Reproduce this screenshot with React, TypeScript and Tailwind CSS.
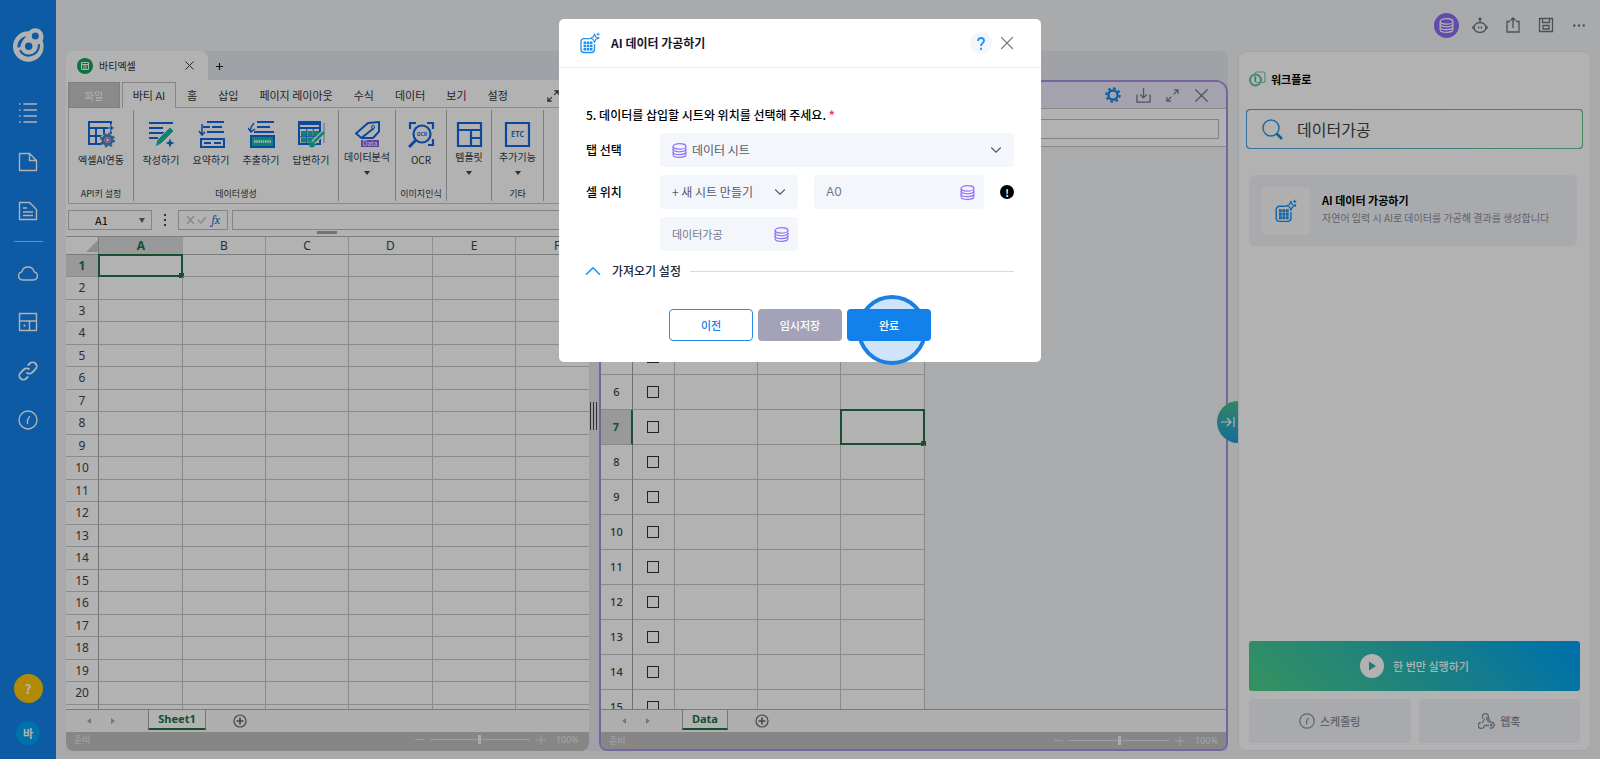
import React from 'react';
import { ChevronDown, ChevronUp, X } from 'lucide-react';

type IconProps = { className?: string };

const menuTabs = ['홈', '삽입', '페이지 레이아웃', '수식', '데이터', '보기', '설정'];
const leftColumns = ['A', 'B', 'C', 'D', 'E', 'F'];
const leftRows = Array.from({ length: 20 }, (_, i) => i + 1);
const rightRows = Array.from({ length: 15 }, (_, i) => i + 1);

/* ---------- Icons ---------- */

const LogoIcon = () => (
  <svg viewBox="0 0 32 34" className="h-[34px] w-8" fill="none">
    <circle cx="16.3" cy="18.5" r="15.3" fill="#fff" />
    <circle cx="23.3" cy="8.5" r="8.3" fill="#fff" />
    <circle cx="23.3" cy="8" r="3.5" fill="#1381ec" />
    <circle cx="16.7" cy="18.300" r="3.700" fill="#1381ec" />
    <path d="M5.500 19.500c-.5-5.500 3-10.500 9-11.300-3 3-5.500 6.300-6.300 11z" fill="#1381ec" />
    <path d="M8.500 23c2 3.500 5.500 5 9.500 4.500 5-.6 9-4.500 9-10.500" stroke="#1381ec" strokeWidth="2.200" strokeLinecap="round" />
  </svg>
);

const DatabaseIcon = ({ className }: IconProps) => (
  <svg viewBox="0 0 16 16" className={className} fill="none" stroke="currentColor" strokeWidth="1.2">
    <ellipse cx="8" cy="3.600" rx="6.800" ry="2.900" />
    <path d="M1.200 3.600v8.800c0 1.600 3 2.900 6.800 2.900s6.800-1.300 6.800-2.900V3.600" />
    <path d="M1.200 6.500c0 1.600 3 2.900 6.800 2.900s6.800-1.300 6.800-2.900M1.200 9.500c0 1.600 3 2.900 6.800 2.900s6.800-1.300 6.800-2.900" />
  </svg>
);

const AiGridIcon = ({ className }: IconProps) => (
  <svg viewBox="0 0 20 22" className={className} fill="none">
    <path d="M10 6.700H4A3 3 0 0 0 1 9.700V17.500a3 3 0 0 0 3 3h7.500a3 3 0 0 0 3-3V12" stroke="#1c8ff0" strokeWidth="1.300" />
    <path d="M3.500 9.500h2.600v2.600H3.500zM6.700 9.500h2.600v2.600H6.700zM9.900 9.500h2.600v2.600H9.900zM3.500 12.700h2.600v2.600H3.500zM6.700 12.700h2.600v2.600H6.700zM9.900 12.700h2.600v2.600H9.900zM3.500 15.900h2.600v2.600H3.500zM6.700 15.900h2.600v2.600H6.700zM9.900 15.900h2.600v2.600H9.900z" fill="#1c8ff0" />
    <path d="M14.500 2l1.200 3 2.800 1.200-2.800 1.200-1.200 3-1.200-3-2.800-1.200 2.800-1.200z" stroke="#1c8ff0" strokeWidth="1.100" strokeLinejoin="round" />
    <path d="M18 .8v3M16.600 2.300h3M18.800 4.800v2" stroke="#1c8ff0" strokeWidth="1" />
  </svg>
);

const ExpandIcon = ({ className }: IconProps) => (
  <svg viewBox="0 0 14 14" className={className} fill="none" stroke="currentColor" strokeWidth="1.300">
    <path d="M8.500 1H13v4.500M13 1 8.300 5.700M5.500 13H1V8.500M1 13l4.700-4.700" />
  </svg>
);

const GaugeIcon = ({ className }: IconProps) => (
  <svg viewBox="0 0 20 20" className={className} fill="none" stroke="currentColor" strokeWidth="1.500">
    <circle cx="10" cy="10" r="9" />
    <path d="M9.500 13.500V10l2-3.500" strokeLinecap="round" />
  </svg>
);

const sideIcons: { label: string; icon: React.ReactNode }[] = [
  {
    label: '목록',
    icon: <path d="M5.500 1H19M5.500 7H19M5.500 13H19M5.500 19H19M1 1h1.500M1 7h1.500M1 13h1.500M1 19h1.500" />,
  },
  { label: '새 문서', icon: <path d="M1.500 1.500h10l7 7v10h-17zM11.500 1.500v7h7" /> },
  { label: '문서', icon: <path d="M1.500 1.500h10l7 7v10h-17zM5 7h4M5 11h10M5 14.500h10" /> },
];

const moreIcons: { label: string; icon: React.ReactNode }[] = [
  { label: '클라우드', icon: <path d="M4.500 17a4.200 4.200 0 0 1-.6-8.300 6.300 6.300 0 0 1 12.200 0 4.200 4.200 0 0 1-.6 8.300z" /> },
  {
    label: '레이아웃',
    icon: (
      <>
        <path d="M1.500 1.500h17v17h-17zM1.500 9h17M11.500 9v9.500" />
        <rect x="5.500" y="12.500" width="2" height="2" fill="currentColor" stroke="none" />
      </>
    ),
  },
  {
    label: '연결',
    icon: (
      <path d="M8.500 11.500a4 4 0 0 0 5.700 0l3.300-3.300a4 4 0 0 0-5.700-5.700l-2 2M11.500 8.500a4 4 0 0 0-5.700 0l-3.300 3.300a4 4 0 0 0 5.700 5.700l2-2" strokeWidth="1.800" />
    ),
  },
  {
    label: '사용량',
    icon: (
      <>
        <circle cx="10" cy="10" r="9" />
        <path d="M9.500 13.500V10l2-3.500" strokeLinecap="round" />
      </>
    ),
  },
];

/* ---------- Sidebar ---------- */

const SideButton: React.FC<{ label: string; children: React.ReactNode }> = ({ label, children }) => (
  <button type="button" aria-label={label} className="flex h-[49px] w-full items-center justify-center text-white">
    <svg viewBox="0 0 20 20" className="h-5 w-5" fill="none" stroke="currentColor" strokeWidth="1.4">
      {children}
    </svg>
  </button>
);

const Sidebar = () => (
  <nav className="flex w-14 shrink-0 flex-col items-center bg-[#1381ec] pt-7 pb-[14px]">
    <LogoIcon />
    <div className="mt-[26px] w-full">
      {sideIcons.map((item) => (
        <SideButton key={item.label} label={item.label}>{item.icon}</SideButton>
      ))}
    </div>
    <div className="my-[6px] h-px w-[29px] bg-white/60" />
    <div className="w-full">
      {moreIcons.map((item) => (
        <SideButton key={item.label} label={item.label}>{item.icon}</SideButton>
      ))}
    </div>
    <button type="button" className="mt-auto h-[29px] w-[29px] rounded-full bg-[#ffc80a] text-[13px] font-bold text-white">?</button>
    <button type="button" className="mt-[18px] h-6 w-6 rounded-full bg-[#00a2f2] text-[11px] font-bold text-white">바</button>
  </nav>
);

/* ---------- Ribbon ---------- */

const TextLines = () => <path d="M1 2h24M1 7h14M1 12h19M1 17h9" stroke="#1268e0" strokeWidth="2" />;

const ribbonIcons = {
  excel: (
    <>
      <path d="M1 1h22v22H1zM1 7h22M1 15h22M8 7v16M16 7v16" stroke="#1268e0" strokeWidth="2" />
      <circle cx="19.500" cy="19" r="7.500" fill="#fff" />
      <circle cx="19.500" cy="19" r="4.500" stroke="#4a86b8" strokeWidth="3" />
      <circle cx="19.500" cy="19" r="6.500" stroke="#4a86b8" strokeWidth="2" strokeDasharray="2.5 2.6" />
      <circle cx="19.500" cy="19" r="2" stroke="#c05fd0" strokeWidth="1.500" />
      <path d="M23.500 3l1 3 2.500 1-2.500 1-1 3-1-3-2.500-1 2.500-1z" fill="#1268e0" stroke="#fff" strokeWidth=".6" />
    </>
  ),
  write: (
    <>
      <TextLines />
      <path d="M9 19 22 6l4 4-13 13-6 3z" fill="#12bda6" stroke="#fff" strokeWidth="1" />
      <path d="M22 17.500l1.300 3.200 3.200 1.300-3.200 1.300-1.300 3.200-1.300-3.200-3.200-1.300 3.200-1.300z" fill="#1268e0" />
    </>
  ),
  summary: (
    <>
      <path d="M9 1h17M5 6h7M14 6h10M9 11h17" stroke="#1268e0" strokeWidth="2" />
      <path d="M4 3v10M1 10l3 4 3-3" stroke="#1268e0" strokeWidth="1.500" />
      <path d="M3 18h23v8H3zM6 22h7M16 22h7" stroke="#1268e0" strokeWidth="2" />
    </>
  ),
  extract: (
    <>
      <path d="M9 1h17M9 6h13M6 11h20" stroke="#1268e0" strokeWidth="2" />
      <path d="M6 2C3 5 2 8 3 11M0 7l3 4 4-3" stroke="#1268e0" strokeWidth="1.500" />
      <path d="M3 15h23v11H3z" fill="#12bda6" stroke="#1268e0" strokeWidth="2" />
      <path d="M6 20.500h17" stroke="#fff" strokeWidth="2.500" strokeDasharray="1.500 .7" />
    </>
  ),
  answer: (
    <>
      <path d="M1 1h21v22H1zM1 3h21M1 7h21" stroke="#1268e0" strokeWidth="2" />
      <path d="M3 10h5v5H3zM9.500 10h5v5h-5zM16 10h5v5h-5zM3 16.500h5v5H3zM9.500 16.500h5v5h-5z" fill="#12bda6" />
      <path d="M8.700 8v15M15.200 8v15M2 15.700h19" stroke="#1268e0" />
      <path d="M25 12 14 23" stroke="#fff" strokeWidth="5" />
      <path d="M26 11 16 21" stroke="#12bda6" strokeWidth="2.500" />
      <circle cx="14" cy="23.500" r="3" fill="#12bda6" />
      <path d="M26 2v20" stroke="#8e99ae" />
    </>
  ),
  analysis: (
    <>
      <path d="M14 2 25 1v9.500L19 17H7.500L2 12.500zM8 16.500 20 7" stroke="#1268e0" strokeWidth="2" strokeLinejoin="round" />
      <circle cx="19" cy="6" r="1.500" fill="#fff" stroke="#1268e0" />
      <rect x="7" y="19" width="18" height="7" fill="#8a5cf0" />
      <text x="16" y="25" textAnchor="middle" fontSize="7" fill="#fff">Data</text>
    </>
  ),
  ocr: (
    <>
      <path d="M2 8V2h6M19 2h6v6M25 18v6h-5" stroke="#1268e0" strokeWidth="2.200" />
      <circle cx="14" cy="13" r="8.500" stroke="#1268e0" strokeWidth="2.200" />
      <path d="M8 19l-7 7" stroke="#1268e0" strokeWidth="3" />
      <text x="14" y="15" textAnchor="middle" fontSize="5" fontWeight="bold" fill="#1268e0">OCR</text>
    </>
  ),
  template: <path d="M2 2h23v23H2zM2 9h23M15 9v16M15 17h10" stroke="#1268e0" strokeWidth="2.200" />,
  etc: (
    <>
      <path d="M2 2h23v23H2z" stroke="#1268e0" strokeWidth="2.200" />
      <text x="13.500" y="16" textAnchor="middle" fontSize="7" fontWeight="bold" fill="#1268e0">ETC</text>
    </>
  ),
};

const RibbonButton: React.FC<{ icon: keyof typeof ribbonIcons; label: string; drop?: boolean }> = ({ icon, label, drop }) => (
  <button type="button" className="flex w-[50px] flex-col items-center text-[10px] leading-4 whitespace-nowrap text-[#333744]">
    <svg viewBox="0 0 27 27" className="h-[27px] w-[27px]" fill="none">{ribbonIcons[icon]}</svg>
    <span className={drop ? 'mt-px' : 'mt-1'}>{label}</span>
    {drop && <span className="mt-[6px] h-0 w-0 border-x-[3px] border-t-[4px] border-x-transparent border-t-[#444]" />}
  </button>
);

const RibbonGroup: React.FC<{ title?: string; className: string; children: React.ReactNode }> = ({ title, className, children }) => (
  <div className={`flex shrink-0 flex-col items-center justify-between border-r border-[#b4b4b4] ${className}`}>
    <div className="flex pt-[11px]">{children}</div>
    <span className="text-[9px] leading-[14px] text-[#333744]">{title}</span>
  </div>
);

const Ribbon = () => (
  <>
    <div className="flex h-7 items-stretch pl-[2px] text-[11px] text-[#333]">
      <button type="button" className="mt-[2px] w-[52px] border border-[#b8b8b8] bg-[#c6c6c6] text-[10px] text-white">파일</button>
      <button type="button" className="mt-[2px] ml-[2px] w-[54px] border border-b-0 border-[#c0c0c0] bg-white">바티 AI</button>
      <div className="flex flex-1 items-center gap-[21px] border-b border-[#c8c8c8] pt-1 pl-[11px] whitespace-nowrap">
        {menuTabs.map((tab) => (
          <button key={tab} type="button">{tab}</button>
        ))}
        <button type="button" aria-label="확장" className="ml-[18px]">
          <ExpandIcon className="h-3 w-3" />
        </button>
      </div>
    </div>
    <div className="ml-[2px] flex h-24 items-stretch border-b border-l border-[#c8c8c8] py-[2px]">
      <RibbonGroup title="API키 설정" className="w-[65px]">
        <RibbonButton icon="excel" label="엑셀AI연동" />
      </RibbonGroup>
      <RibbonGroup title="데이터생성" className="w-[205px]">
        <RibbonButton icon="write" label="작성하기" />
        <RibbonButton icon="summary" label="요약하기" />
        <RibbonButton icon="extract" label="추출하기" />
        <RibbonButton icon="answer" label="답변하기" />
      </RibbonGroup>
      <RibbonGroup className="w-[57px]">
        <RibbonButton icon="analysis" label="데이터분석" drop />
      </RibbonGroup>
      <RibbonGroup title="이미지인식" className="w-[51px]">
        <RibbonButton icon="ocr" label="OCR" />
      </RibbonGroup>
      <RibbonGroup className="w-[45px]">
        <RibbonButton icon="template" label="템플릿" drop />
      </RibbonGroup>
      <RibbonGroup title="기타" className="w-[52px]">
        <RibbonButton icon="etc" label="추가기능" drop />
      </RibbonGroup>
    </div>
    <div className="flex h-[33px] items-start border-b border-[#b4b4b4] pt-[6px] pl-[2px]">
      <div className="flex h-5 w-[84px] items-center border border-[#bdbdbd] pr-[6px]">
        <input aria-label="이름 상자" defaultValue="A1" className="w-full min-w-0 pl-[26px] text-[11px] outline-none" />
        <span className="h-0 w-0 shrink-0 border-x-[3px] border-t-[5px] border-x-transparent border-t-[#666]" />
      </div>
      <div className="flex h-5 w-[26px] flex-col items-center justify-center gap-[3px]">
        <span className="h-[2px] w-[2px] bg-[#444]" />
        <span className="h-[2px] w-[2px] bg-[#444]" />
        <span className="h-[2px] w-[2px] bg-[#444]" />
      </div>
      <div className="flex h-5 w-[50px] items-center justify-around border border-[#bdbdbd] px-1">
        <svg viewBox="0 0 20 8" className="h-2 w-5" fill="none" stroke="#c8c8c8" strokeWidth="1.5">
          <path d="M1 0l7 8M8 0 1 8M12 4l3 3 5-6" />
        </svg>
        <span className="font-serif text-[12px] text-[#2a6bc0] italic">fx</span>
      </div>
      <input aria-label="수식 입력줄" className="ml-1 h-5 min-w-0 flex-1 border border-r-0 border-[#bdbdbd] outline-none" />
    </div>
  </>
);

/* ---------- Sheets ---------- */

const SheetTabs: React.FC<{ name: string; tabClass: string }> = ({ name, tabClass }) => (
  <div className="flex h-[23px] shrink-0 items-start border-t border-[#b0b0b0] bg-[#fafafa]">
    <div className="flex h-full w-20 items-center gap-5 pl-[21px]">
      <span className="h-0 w-0 border-y-[3px] border-r-[4px] border-y-transparent border-r-[#aaa]" />
      <span className="h-0 w-0 border-y-[3px] border-l-[4px] border-y-transparent border-l-[#aaa]" />
    </div>
    <button type="button" className={`h-5 border-x border-b-2 border-x-[#aaa] border-b-[#217346] bg-white font-['Noto_Sans',sans-serif] text-[11px] font-bold text-[#217346] ${tabClass}`}>
      {name}
    </button>
    <button type="button" aria-label="시트 추가" className="mt-1 ml-[27px]">
      <svg viewBox="0 0 14 14" className="h-[14px] w-[14px]" fill="none" stroke="#666" strokeWidth="1.200">
        <circle cx="7" cy="7" r="6" />
        <path d="M7 3.500v7M3.500 7h7" strokeWidth="1.600" />
      </svg>
    </button>
  </div>
);

const StatusBar: React.FC<{ className: string }> = ({ className }) => (
  <div className={`flex shrink-0 items-center bg-[#c0c0c0] text-[9px] text-[#ececec] ${className}`}>
    <span>준비</span>
    <div className="ml-auto flex items-center">
      <span className="h-px w-[9px] bg-[#e4e4e4]" />
      <div className="mx-[6px] flex h-px w-[100px] items-center justify-center bg-[#e4e4e4]">
        <span className="h-[9px] w-[3px] bg-[#f4f4f4]" />
      </div>
      <svg viewBox="0 0 10 10" className="h-[10px] w-[10px]" stroke="#e4e4e4">
        <path d="M5 0v10M0 5h10" />
      </svg>
      <span className="ml-[10px] w-[25px] font-['Noto_Sans',sans-serif]">100%</span>
    </div>
  </div>
);

const Handle = () => <span className="absolute -right-[3px] -bottom-[3px] h-[5px] w-[5px] bg-[#217346]" />;

const LeftSheet = () => (
  <section className="relative flex w-[45%] shrink-0 flex-col overflow-hidden rounded-b-lg bg-white">
    <Ribbon />
    <span className="absolute top-[151px] left-[251px] h-[3px] w-5 bg-[#a5a5a5]" />
    <div className="min-h-0 flex-1 overflow-hidden">
      <table className="w-[533px] table-fixed border-separate border-spacing-0 font-['Noto_Sans',sans-serif] text-[12px] leading-4 text-[#444]">
        <colgroup>
          <col className="w-[33px]" />
          <col className="w-[84px]" />
          <col className="w-[83px]" />
          <col className="w-[83px]" />
          <col className="w-[84px]" />
          <col className="w-[83px]" />
          <col className="w-[83px]" />
        </colgroup>
        <thead>
          <tr className="h-[18px]">
            <th className="border-r border-b border-[#b0b0b0] p-0">
              <span className="ml-auto block h-0 w-0 border-b-[12px] border-l-[12px] border-b-[#ccc] border-l-transparent" />
            </th>
            {leftColumns.map((col) => (
              <th
                key={col}
                className={col === 'A' ? 'border-b border-[#b0b0b0] bg-[#dcdcdc] p-0 text-[#217346]' : 'border-r border-b border-r-[#d0d0d0] border-b-[#b0b0b0] p-0 font-normal'}
              >
                {col}
              </th>
            ))}
          </tr>
        </thead>
        <tbody>
          {leftRows.map((row) => (
            <tr key={row} className="odd:h-[22px] even:h-[23px]">
              <th
                className={
                  row === 1
                    ? 'border-r border-b border-[#c8c8c8] bg-[#dcdcdc] p-0 text-[#217346]'
                    : 'border-r border-b border-r-[#a8a8a8] border-b-[#c8c8c8] p-0 font-normal'
                }
              >
                {row}
              </th>
              {leftColumns.map((col) => (
                <td key={col} className="relative border-r border-b border-[#c6c6c6] p-0">
                  {row === 1 && col === 'A' && (
                    <div className="absolute -inset-px border-2 border-[#217346]">
                      <Handle />
                    </div>
                  )}
                </td>
              ))}
            </tr>
          ))}
          <tr className="h-[22px]">
            <td className="border-r border-[#a8a8a8]" />
            {leftColumns.map((col) => (
              <td key={col} className="border-r border-[#c6c6c6]" />
            ))}
          </tr>
        </tbody>
      </table>
    </div>
    <SheetTabs name="Sheet1" tabClass="ml-[2px] w-[58px]" />
    <StatusBar className="h-[19px] pr-2 pb-1 pl-2" />
  </section>
);

const RightSheet = () => (
  <section className="flex min-w-0 flex-1 flex-col overflow-hidden rounded-t-xl rounded-b-lg border-2 border-[#ab90e0] bg-[#f3f5f8]">
    <div className="flex h-[26px] shrink-0 items-center justify-end gap-[15px] bg-[#ebe8fb] pr-[13px] text-[#777a8a]">
      <button type="button" aria-label="설정">
        <svg viewBox="0 0 16 16" className="h-4 w-4" fill="none" stroke="#0a80ea">
          <circle cx="8" cy="8" r="4.600" strokeWidth="2.200" />
          <circle cx="8" cy="8" r="6.700" strokeWidth="2" strokeDasharray="2.600 2.662" />
        </svg>
      </button>
      <button type="button" aria-label="다운로드">
        <svg viewBox="0 0 16 16" className="h-[15px] w-[15px]" fill="none" stroke="currentColor" strokeWidth="1.400">
          <path d="M1 7v8h14V7M8 0v10.500M4.500 7 8 10.500 11.500 7" />
        </svg>
      </button>
      <button type="button" aria-label="확장">
        <ExpandIcon className="h-[13px] w-[13px]" />
      </button>
      <button type="button" aria-label="닫기" className="-ml-1">
        <X className="h-[23px] w-[23px]" strokeWidth={1.3} />
      </button>
    </div>
    <div className="h-[39px] shrink-0 border-y border-[#c4c4c4] bg-white pt-[8px] pr-[7px] pb-[9px] pl-[170px]">
      <input aria-label="데이터 수식 입력줄" className="h-full w-full border border-[#bdbdbd] outline-none" />
    </div>
    <div className="min-h-0 flex-1 overflow-hidden">
      <table className="w-[324px] table-fixed border-separate border-spacing-0 bg-white font-['Noto_Sans',sans-serif] text-[11px] text-[#444]">
        <colgroup>
          <col className="w-8" />
          <col className="w-[42px]" />
          <col className="w-[83px]" />
          <col className="w-[83px]" />
          <col className="w-[84px]" />
        </colgroup>
        <thead>
          <tr className="h-[53px]">
            <th className="border-r border-b border-[#b0b0b0]" />
            <th className="border-r border-b border-[#b0b0b0]" />
            <th className="border-r border-b border-[#b0b0b0]">A</th>
            <th className="border-r border-b border-[#b0b0b0]">B</th>
            <th className="border-r border-b border-[#b0b0b0]">C</th>
          </tr>
        </thead>
        <tbody>
          {rightRows.map((row) => (
            <tr key={row} className="h-[35px]">
              <th
                className={
                  row === 7
                    ? 'border-r-2 border-b border-r-[#217346] border-b-[#c6c6c6] bg-[#dcdcdc] p-0 text-[#217346]'
                    : 'border-r border-b border-r-[#a0a0a0] border-b-[#c6c6c6] p-0 font-medium'
                }
              >
                {row}
              </th>
              <td className="border-r border-b border-[#c6c6c6] p-0">
                <input
                  type="checkbox"
                  aria-label={`${row}행 선택`}
                  className="mx-auto block h-3 w-3 appearance-none border border-[#333] bg-white"
                />
              </td>
              <td className="border-r border-b border-[#c6c6c6]" />
              <td className="border-r border-b border-[#c6c6c6]" />
              <td className="relative border-r border-b border-[#c6c6c6]">
                {row === 7 && (
                  <div className="absolute -inset-px border-2 border-[#217346]">
                    <Handle />
                  </div>
                )}
              </td>
            </tr>
          ))}
        </tbody>
      </table>
    </div>
    <SheetTabs name="Data" tabClass="ml-px w-[46px]" />
    <StatusBar className="h-[17px] pr-[6px] pl-2" />
  </section>
);

const Workspace = () => (
  <div className="relative flex min-w-0 flex-1 flex-col">
    <div className="flex h-[29px] shrink-0 items-stretch rounded-t-lg bg-[#e7e9ef]">
      <div className="flex w-[142px] items-center rounded-t-lg bg-white pr-[11px] pl-[11px] text-[10px] text-[#333]">
        <span className="mr-[6px] flex h-4 w-4 items-center justify-center rounded-full bg-[#10a45c]">
          <svg viewBox="0 0 8 8" className="h-2 w-2" fill="none" stroke="#fff">
            <path d="M.5.5h7v7h-7zM.5 2.500h7M2 4h4M2 6h4" />
          </svg>
        </span>
        바티엑셀
        <button type="button" aria-label="탭 닫기" className="ml-auto">
          <X className="h-[15px] w-[15px]" strokeWidth={1.5} />
        </button>
      </div>
      <button type="button" aria-label="새 탭" className="ml-2 pt-[2px]">
        <svg viewBox="0 0 8 8" className="h-[7px] w-[7px]" stroke="#222" strokeWidth="1.400">
          <path d="M4 0v8M0 4h8" />
        </svg>
      </button>
    </div>
    <div className="flex min-h-0 flex-1 bg-[#e7e9ef]">
      <LeftSheet />
      <div className="flex w-[10px] shrink-0 items-center justify-center gap-[2px]">
        <span className="h-7 w-px bg-[#444]" />
        <span className="h-7 w-px bg-[#444]" />
        <span className="h-7 w-px bg-[#444]" />
      </div>
      <RightSheet />
    </div>
    <button
      type="button"
      aria-label="워크플로 접기"
      className="absolute top-1/2 -right-[10px] flex h-[42px] w-[21px] items-center justify-center rounded-l-full bg-linear-to-b from-[#4bbd8e] to-[#1e9bd8]"
    >
      <svg viewBox="0 0 14 10" className="h-[10px] w-[14px]" fill="none" stroke="#fff" strokeWidth="1.200">
        <path d="M0 5h10M6 1l4 4-4 4M13 0v10" />
      </svg>
    </button>
  </div>
);

/* ---------- Header and workflow panel ---------- */

const TopBar = () => (
  <header className="flex h-[50px] shrink-0 items-center justify-end gap-[17px] pr-[13px] text-[#6f7282]">
    <button type="button" aria-label="데이터" className="-mr-1 flex h-[25px] w-[25px] items-center justify-center rounded-full bg-[#8b6cf5] text-white">
      <DatabaseIcon className="h-[15px] w-[15px]" />
    </button>
    <button type="button" aria-label="로봇">
      <svg viewBox="0 0 16 16" className="h-4 w-4" fill="none" stroke="currentColor" strokeWidth="1.300">
        <ellipse cx="8" cy="10.500" rx="6" ry="5" />
        <path d="M8 5.500V1M6.500 2.500 8 1l1.500 1.500M2 9 .7 10.500 2 12M14 9l1.300 1.500L14 12M6.700 9.500v2M9.300 9.500v2" />
      </svg>
    </button>
    <button type="button" aria-label="내보내기">
      <svg viewBox="0 0 16 16" className="h-4 w-4" fill="none" stroke="currentColor" strokeWidth="1.300">
        <path d="M5 4.500H2v10.500h12V4.500h-3M8 11V1M5.500 3.500 8 1l2.500 2.500" />
      </svg>
    </button>
    <button type="button" aria-label="저장">
      <svg viewBox="0 0 16 16" className="h-4 w-4" fill="none" stroke="currentColor" strokeWidth="1.300">
        <path d="M1.500 1.500h13v13h-13zM4.500 1.500v4h7v-4M5 8.500h6v3.500H5z" />
      </svg>
    </button>
    <button type="button" aria-label="더보기">
      <svg viewBox="0 0 16 16" className="h-4 w-4" fill="currentColor">
        <circle cx="3.300" cy="8.500" r="1.200" />
        <circle cx="8" cy="8.500" r="1.200" />
        <circle cx="12.700" cy="8.500" r="1.200" />
      </svg>
    </button>
  </header>
);

const WorkflowPanel = () => (
  <aside className="ml-[10px] flex w-[353px] shrink-0 flex-col rounded-lg border border-[#e9ebf2] bg-white px-[10px] pb-[7px]">
    <h2 className="mt-[19px] flex h-4 items-center gap-[5px] text-[11px] font-bold text-black">
      <svg viewBox="0 0 17 16" className="h-4 w-[17px]" fill="none">
        <circle cx="6.500" cy="9" r="5.500" stroke="#5fbfae" strokeWidth="2" />
        <rect x="6" y="1" width="10" height="10.500" rx="2" stroke="#78cfb0" strokeWidth="1.200" />
        <path d="M6.500 6v4" stroke="#3fa7b8" strokeWidth="1.200" />
      </svg>
      워크플로
    </h2>
    <label className="mt-[22px] -mr-[3px] -ml-[3px] flex h-10 rounded bg-linear-to-r from-[#4ba3e8] to-[#62c68f] p-px">
      <span className="flex flex-1 items-center rounded bg-white pl-[15px]">
        <svg viewBox="0 0 21 21" className="h-[21px] w-[21px]" fill="none">
          <circle cx="9" cy="9" r="8" stroke="#2f9be0" strokeWidth="1.500" />
          <path d="M14.500 14.500l5.500 5.500" stroke="#1a85d4" strokeWidth="2.500" />
        </svg>
        <input type="text" aria-label="워크플로 검색" defaultValue="데이터가공" className="ml-[14px] min-w-0 flex-1 bg-transparent text-[16px] text-[#3c3f48] outline-none" />
      </span>
    </label>
    <button type="button" className="mt-[26px] mr-[3px] flex h-[71px] items-center rounded-md bg-[#f3f4f8] pr-2 pl-[13px] text-left">
      <span className="flex h-12 w-12 shrink-0 items-center justify-center rounded bg-[#fcfcfd]">
        <AiGridIcon className="h-6 w-[22px]" />
      </span>
      <span className="ml-3 min-w-0 pb-1">
        <span className="block text-[11px] leading-[18px] font-bold text-black">AI 데이터 가공하기</span>
        <span className="block text-[10px] leading-[18px] whitespace-nowrap text-[#8b8e9b]">자연어 입력 시 AI로 데이터를 가공해 결과를 생성합니다</span>
      </span>
    </button>
    <button type="button" className="mt-auto flex h-[50px] shrink-0 items-center justify-center gap-[9px] rounded-[3px] bg-linear-45 from-[#4cd288] via-[#29b8b7] to-[#009ff9] text-[11px] font-medium text-white">
      <svg viewBox="0 0 24 24" className="h-6 w-6">
        <circle cx="12" cy="12" r="12" fill="#fff" />
        <path d="M9 7.500v9l7-4.500z" fill="#2ab0a0" />
      </svg>
      한 번만 실행하기
    </button>
    <div className="mt-2 grid h-11 shrink-0 grid-cols-2 gap-2 text-[11px] font-medium text-[#8a8d9c]">
      <button type="button" className="flex items-center justify-center gap-[5px] rounded bg-[#f3f4f8]">
        <GaugeIcon className="h-4 w-4" />
        스케줄링
      </button>
      <button type="button" className="flex items-center justify-center gap-[5px] rounded bg-[#f3f4f8]">
        <svg viewBox="0 0 17 16" className="h-4 w-[17px]" fill="none" stroke="currentColor" strokeWidth="1.300" strokeLinejoin="round">
          <path d="M5 5.500a3 3 0 1 1 5.200-.8l2.300 4.500a3 3 0 1 1-.8 5.400M6.500 5.800 4.200 10M8 4l2.800 5.500M11 12.500H6.300a3 3 0 1 1-3.500-3" />
          <circle cx="13.300" cy="12" r=".8" />
        </svg>
        웹훅
      </button>
    </div>
  </aside>
);

/* ---------- Dialog ---------- */

const DataDialog = () => (
  <div className="fixed inset-0 flex items-start justify-center bg-black/30 pt-[19px]">
    <div role="dialog" aria-label="AI 데이터 가공하기" className="w-[482px] rounded-[5px] bg-white">
      <header className="flex h-[49px] items-center border-b border-[#eceef1] pr-[23px] pl-[21px]">
        <AiGridIcon className="h-[22px] w-5" />
        <h1 className="ml-[11px] text-[12px] font-bold text-[#17182f]">AI 데이터 가공하기</h1>
        <button type="button" aria-label="도움말" className="ml-auto flex h-[22px] w-[22px] items-center justify-center rounded-full bg-[#f3f6fa]">
          <svg viewBox="0 0 8 13" className="h-[13px] w-2" fill="none" stroke="#1a95f5" strokeWidth="1.800">
            <path d="M1 4c0-2 1.200-3 3-3s3 1 3 2.700C7 6 4 6 4 9M4 10.800V13" />
          </svg>
        </button>
        <button type="button" aria-label="닫기" className="ml-1">
          <X className="h-[22px] w-[22px] text-[#777b8b]" strokeWidth={1.3} />
        </button>
      </header>

      <form className="px-[27px] pb-[21px] text-[12px] text-black">
        <p className="mt-[37px] mb-2 font-medium leading-5">
          5. 데이터를 삽입할 시트와 위치를 선택해 주세요. <span className="font-bold text-[#f0386b]">*</span>
        </p>

        <div className="grid grid-cols-[74px_minmax(0,1fr)] gap-y-2">
          <label htmlFor="tab-select" className="self-center font-medium">탭 선택</label>
          <div className="flex h-[34px] items-center rounded bg-[#f3f6fa] pr-[9px] pl-3 text-[#555b70]">
            <DatabaseIcon className="h-[15px] w-[15px] text-[#9373f7]" />
            <select id="tab-select" className="ml-[5px] min-w-0 flex-1 appearance-none bg-transparent text-[12px] outline-none">
              <option>데이터 시트</option>
            </select>
            <ChevronDown className="h-[18px] w-[18px]" strokeWidth={1.5} />
          </div>

          <label htmlFor="sheet-select" className="self-center font-medium">셀 위치</label>
          <div className="flex items-center">
            <div className="flex h-[34px] w-[138px] shrink-0 items-center rounded bg-[#f3f6fa] pr-[9px] pl-3 text-[#555b70]">
              <select id="sheet-select" className="min-w-0 flex-1 appearance-none bg-transparent text-[12px] outline-none">
                <option>+ 새 시트 만들기</option>
              </select>
              <ChevronDown className="h-[18px] w-[18px] shrink-0" strokeWidth={1.5} />
            </div>
            <div className="ml-4 flex h-[34px] min-w-0 flex-1 items-center rounded bg-[#f3f6fa] pr-[9px] pl-3 text-[#70768a]">
              <input aria-label="셀" defaultValue="A0" className="min-w-0 flex-1 bg-transparent font-[Inter,sans-serif] text-[12px] outline-none" />
              <DatabaseIcon className="h-[15px] w-[15px] text-[#9373f7]" />
            </div>
            <span className="ml-4 flex h-[14px] w-[14px] shrink-0 items-center justify-center rounded-full bg-black text-[10px] font-bold text-white">!</span>
          </div>

          <div className="col-start-2 flex h-[34px] w-[138px] items-center rounded bg-[#f3f6fa] pr-[9px] pl-3 text-[#70768a]">
            <input aria-label="시트 이름" defaultValue="데이터가공" className="min-w-0 flex-1 bg-transparent text-[11px] outline-none" />
            <DatabaseIcon className="h-[15px] w-[15px] text-[#9373f7]" />
          </div>
        </div>

        <button type="button" className="mt-[10px] flex h-5 w-full items-center font-medium text-[#22243a]">
          <ChevronUp className="-ml-[6px] h-[26px] w-[26px] text-[#1a95f5]" strokeWidth={1.5} />
          <span className="ml-[6px]">가져오기 설정</span>
          <span className="ml-[9px] h-px flex-1 bg-[#d9dbe2]" />
        </button>

        <div className="mt-[28px] flex justify-center gap-[5px] text-[11px] font-medium">
          <button type="button" className="h-8 w-[84px] rounded border border-[#2a8af0] text-[#1381ec]">이전</button>
          <button type="button" className="h-8 w-[84px] rounded bg-[#a2a3b9] text-white">임시저장</button>
          <div className="relative">
            {/* click highlight */}
            <span className="absolute -top-[14px] left-[10px] h-[70px] w-[70px] rounded-full border-4 border-[#1a80e0] bg-[#cfe4fa]" />
            <button type="button" className="relative h-8 w-[84px] rounded bg-[#1381ec] text-white">완료</button>
          </div>
        </div>
      </form>
    </div>
  </div>
);

const App: React.FC = () => {
  return (
    <div className="flex h-screen overflow-hidden bg-[#f3f4f7] font-['Noto_Sans_CJK_KR',sans-serif]">
      <Sidebar />
      <main className="flex min-w-0 flex-1 flex-col">
        <TopBar />
        <div className="flex min-h-0 flex-1 pt-px pr-[9px] pb-2 pl-[10px]">
          <Workspace />
          <WorkflowPanel />
        </div>
      </main>
      <DataDialog />
    </div>
  );
};

export default App;
